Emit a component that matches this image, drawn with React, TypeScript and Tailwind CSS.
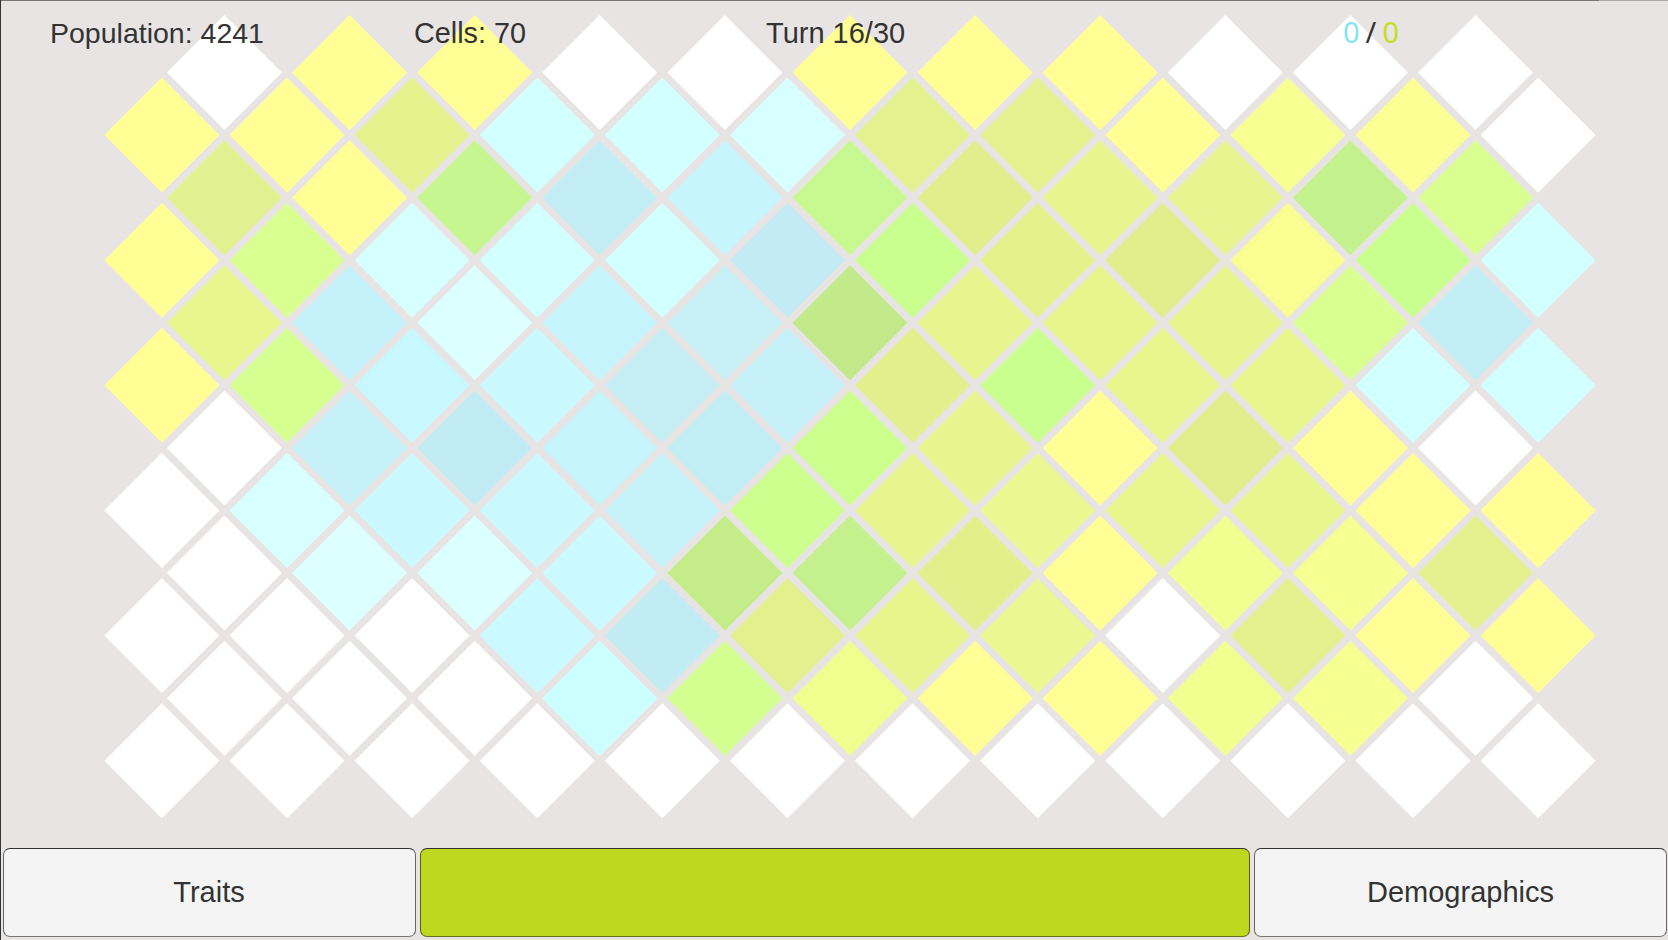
const W = "#ffffff";
const Y = "#ffff96";

const rows: string[][] = [
  [W, Y, Y, W, W, Y, Y, Y, W, W, W],
  [Y, Y, "#e4f38e", "#d2ffff", "#d2ffff", "#d8ffff", "#e4f290", "#e4f290", Y, "#f8ff92", "#fcff94", W],
  ["#e2f290", Y, "#c6f690", "#c3eef5", "#c6f5fe", "#c8f890", "#e0ee8c", "#e8f58e", "#e6f38e", "#c4f28e", "#d8ff90"],
  [Y, "#d8ff90", "#d6ffff", "#d2ffff", "#d2ffff", "#c2ebf3", "#c8ff8e", "#e4f28c", "#e0ee8c", "#f8ff90", "#c8ff8e", "#d2ffff"],
  ["#e8f68e", "#c4f0fa", "#dcffff", "#c6f4fc", "#c6eff6", "#c2e98a", "#e8f58e", "#e6f48c", "#e6f48e", "#d8ff90", "#c3eef6"],
  [Y, "#d6ff92", "#c8f8ff", "#caf8ff", "#c6eef5", "#c6f0f8", "#e2ef8c", "#c8ff8e", "#e8f68e", "#e8f68e", "#d2ffff", "#d2ffff"],
  [W, "#c6f0f8", "#c2ecf4", "#c6f4fb", "#c2eef6", "#ccff8e", "#e8f58e", Y, "#e2ee8c", Y, W],
  [W, "#d8ffff", "#caf8ff", "#caf8ff", "#c6f2fa", "#ccff8e", "#e8f58e", "#ebf892", "#e8f68e", "#e8f68e", Y, Y],
  [W, "#dcffff", "#dcffff", "#caf9ff", "#c4ec88", "#c4f08e", "#e2f08c", Y, "#f0ff90", "#f6ff92", "#e4f18e"],
  [W, W, W, "#caf9ff", "#c2ecf4", "#e2f08e", "#e8f58c", "#ebf892", W, "#e4f18e", Y, Y],
  [W, W, W, "#ccffff", "#d2ff90", "#eeff90", Y, Y, "#f0ff90", "#f6ff92", W],
  [W, W, W, W, W, W, W, W, W, W, W, W],
];

function Cell({ color }: { color: string }) {
  return (
    <div
      className="w-[115px] h-[115px] shrink-0 [clip-path:polygon(50%_0,100%_50%,50%_100%,0_50%)]"
      style={{ backgroundColor: color }}
    />
  );
}

function FooterButton({ label }: { label: string }) {
  return (
    <button className="w-[413px] h-full flex items-center justify-center rounded-[7px] bg-[#f4f4f4] border border-t-[#333333] border-x-[#666666] border-b-[#777777] text-[29px] text-[#333333]">
      {label}
    </button>
  );
}

export default function App() {
  return (
    <div className="relative w-[1668px] h-[940px] overflow-hidden flex flex-col bg-[#e8e4e4] border-l border-[#333333] font-['Liberation_Sans',Arial,sans-serif]">
      <div className="absolute left-0 top-0 w-[1598px] h-px bg-[#777777]" />
      <div className="absolute left-[1598px] top-0 w-[70px] h-px bg-[#aaaaaa]" />

      <div className="flex-1 flex flex-col pt-[15px] pl-[103.4px]">
        {rows.map((row, r) => (
          <div
            key={r}
            className={
              r % 2 === 0
                ? "flex gap-[10.12px] ml-[62.55px] h-[115px]"
                : "flex gap-[10.12px] h-[115px] -mt-[52.45px]"
            }
            style={r > 0 && r % 2 === 0 ? { marginTop: "-52.45px" } : undefined}
          >
            {row.map((c, i) => (
              <Cell key={i} color={c} />
            ))}
          </div>
        ))}
      </div>

      <div className="absolute left-[49px] top-[16px] flex items-center h-[34px] text-[28.8px] leading-none text-[#333333]">
        <div className="w-[364px] text-[28.5px]">Population: 4241</div>
        <div className="w-[352px]">Cells: 70</div>
        <div className="w-[577px] text-[29px]">Turn 16/30</div>
        <div className="flex gap-[6px] items-center font-['Noto_Sans',sans-serif] text-[29px] mb-[4px]">
          <span className="text-[#84e4f2]">0</span>
          <span className="text-[#333333]">/</span>
          <span className="text-[#c6de20]">0</span>
        </div>
      </div>

      <div className="h-[89px] mb-[3px] flex gap-[4.5px] pl-[1.5px]">
        <FooterButton label="Traits" />
        <div className="w-[829.5px] h-full rounded-[7px] bg-[#bdd91f] border border-t-[#333333] border-x-[#555f10] border-b-[#66711a]" />
        <FooterButton label="Demographics" />
      </div>
    </div>
  );
}
